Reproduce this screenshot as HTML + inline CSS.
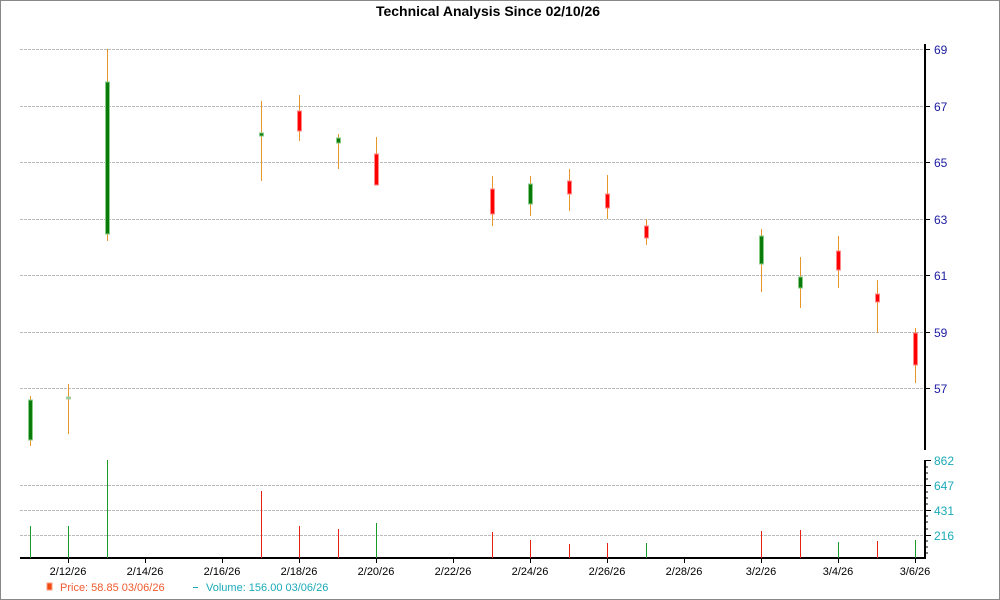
<!DOCTYPE html>
<html><head><meta charset="utf-8"><style>
html,body{margin:0;padding:0;background:#fff;}
svg{display:block;font-family:"Liberation Sans",sans-serif;}
</style></head><body>
<svg width="1000" height="600" viewBox="0 0 1000 600" xmlns="http://www.w3.org/2000/svg">
<rect x="0.5" y="0.5" width="999" height="599" fill="#fff" stroke="#888" stroke-width="1"/>
<text x="488" y="16" text-anchor="middle" font-size="14" font-weight="bold" fill="#000">Technical Analysis Since 02/10/26</text>
<g stroke="#bbb" stroke-dasharray="3,1" stroke-width="1">
<line x1="20" y1="49.5" x2="924" y2="49.5"/><line x1="20" y1="106.5" x2="924" y2="106.5"/>
<line x1="20" y1="162.5" x2="924" y2="162.5"/><line x1="20" y1="219.5" x2="924" y2="219.5"/>
<line x1="20" y1="275.5" x2="924" y2="275.5"/><line x1="20" y1="332.5" x2="924" y2="332.5"/>
<line x1="20" y1="388.5" x2="924" y2="388.5"/>
<line x1="20" y1="485.5" x2="924" y2="485.5"/><line x1="20" y1="510.5" x2="924" y2="510.5"/>
<line x1="20" y1="535.5" x2="924" y2="535.5"/>
</g>
<!-- axes -->
<line x1="925" y1="44" x2="925" y2="450" stroke="#000" stroke-width="2"/>
<line x1="925" y1="460" x2="925" y2="559" stroke="#000" stroke-width="2"/>
<line x1="20" y1="558" x2="926" y2="558" stroke="#000" stroke-width="2"/>
<g stroke="#000" stroke-width="1">
<line x1="925" y1="49.5" x2="930" y2="49.5"/><line x1="925" y1="106.5" x2="930" y2="106.5"/>
<line x1="925" y1="162.5" x2="930" y2="162.5"/><line x1="925" y1="219.5" x2="930" y2="219.5"/>
<line x1="925" y1="275.5" x2="930" y2="275.5"/><line x1="925" y1="332.5" x2="930" y2="332.5"/>
<line x1="925" y1="388.5" x2="930" y2="388.5"/>
<line x1="925" y1="460.5" x2="931" y2="460.5"/><line x1="925" y1="485.5" x2="931" y2="485.5"/>
<line x1="925" y1="510.5" x2="931" y2="510.5"/><line x1="925" y1="535.5" x2="931" y2="535.5"/>
<line x1="925" y1="467" x2="928" y2="467"/><line x1="925" y1="473" x2="928" y2="473"/><line x1="925" y1="479" x2="928" y2="479"/>
<line x1="925" y1="492" x2="928" y2="492"/><line x1="925" y1="498" x2="928" y2="498"/><line x1="925" y1="504" x2="928" y2="504"/>
<line x1="925" y1="516" x2="928" y2="516"/><line x1="925" y1="522" x2="928" y2="522"/><line x1="925" y1="529" x2="928" y2="529"/>
<line x1="925" y1="541" x2="928" y2="541"/><line x1="925" y1="547" x2="928" y2="547"/><line x1="925" y1="553" x2="928" y2="553"/>
<line x1="68.5" y1="558" x2="68.5" y2="563"/><line x1="145.5" y1="558" x2="145.5" y2="563"/>
<line x1="222.5" y1="558" x2="222.5" y2="563"/><line x1="299.5" y1="558" x2="299.5" y2="563"/>
<line x1="376.5" y1="558" x2="376.5" y2="563"/><line x1="453.5" y1="558" x2="453.5" y2="563"/>
<line x1="530.5" y1="558" x2="530.5" y2="563"/><line x1="607.5" y1="558" x2="607.5" y2="563"/>
<line x1="684.5" y1="558" x2="684.5" y2="563"/><line x1="761.5" y1="558" x2="761.5" y2="563"/>
<line x1="838.5" y1="558" x2="838.5" y2="563"/><line x1="915.5" y1="558" x2="915.5" y2="563"/>
</g>
<g font-size="12" fill="#1a1aa0">
<text x="934" y="54">69</text><text x="934" y="111">67</text><text x="934" y="167">65</text>
<text x="934" y="224">63</text><text x="934" y="280">61</text><text x="934" y="337">59</text>
<text x="934" y="393">57</text>
</g>
<g font-size="12" fill="#1aaab8">
<text x="934" y="465">862</text><text x="934" y="490">647</text><text x="934" y="515">431</text><text x="934" y="540">216</text>
</g>
<g font-size="11" fill="#000" text-anchor="middle">
<text x="68" y="575">2/12/26</text><text x="145" y="575">2/14/26</text><text x="222" y="575">2/16/26</text>
<text x="299" y="575">2/18/26</text><text x="376" y="575">2/20/26</text><text x="453" y="575">2/22/26</text>
<text x="530" y="575">2/24/26</text><text x="607" y="575">2/26/26</text><text x="684" y="575">2/28/26</text>
<text x="761" y="575">3/2/26</text><text x="838" y="575">3/4/26</text><text x="915" y="575">3/6/26</text>
</g>
<!-- wicks -->
<g stroke="#e8962a" stroke-width="1">
<line x1="30.5" y1="396" x2="30.5" y2="446"/><line x1="68.5" y1="384" x2="68.5" y2="434"/>
<line x1="107.5" y1="49" x2="107.5" y2="241"/><line x1="261.5" y1="101" x2="261.5" y2="181"/>
<line x1="299.5" y1="95" x2="299.5" y2="141"/><line x1="338.5" y1="134" x2="338.5" y2="169"/>
<line x1="376.5" y1="137" x2="376.5" y2="185"/><line x1="492.5" y1="176" x2="492.5" y2="226"/>
<line x1="530.5" y1="176" x2="530.5" y2="216"/><line x1="569.5" y1="169" x2="569.5" y2="211"/>
<line x1="607.5" y1="175" x2="607.5" y2="219"/><line x1="646.5" y1="219" x2="646.5" y2="245"/>
<line x1="761.5" y1="229" x2="761.5" y2="292"/><line x1="800.5" y1="257" x2="800.5" y2="308"/>
<line x1="838.5" y1="236" x2="838.5" y2="288"/><line x1="877.5" y1="280" x2="877.5" y2="333"/>
<line x1="915.5" y1="328" x2="915.5" y2="383"/>
</g>
<!-- bodies -->
<g stroke-width="1">
<rect x="28.5" y="400" width="4" height="40" fill="#0a7a0a" stroke="#8c8"/>
<rect x="66.5" y="397" width="4" height="2" fill="#8c8" stroke="#aca"/>
<rect x="105.5" y="82" width="4" height="152" fill="#0a7a0a" stroke="#8c8"/>
<rect x="259.5" y="133" width="4" height="3" fill="#0a7a0a" stroke="#8c8"/>
<rect x="297.5" y="111" width="4" height="20" fill="#f00" stroke="#f88"/>
<rect x="336.5" y="138" width="4" height="5" fill="#0a7a0a" stroke="#8c8"/>
<rect x="374.5" y="154" width="4" height="31" fill="#f00" stroke="#f88"/>
<rect x="490.5" y="189" width="4" height="25" fill="#f00" stroke="#f88"/>
<rect x="528.5" y="184" width="4" height="20" fill="#0a7a0a" stroke="#8c8"/>
<rect x="567.5" y="181" width="4" height="13" fill="#f00" stroke="#f88"/>
<rect x="605.5" y="194" width="4" height="14" fill="#f00" stroke="#f88"/>
<rect x="644.5" y="226" width="4" height="12" fill="#f00" stroke="#f88"/>
<rect x="759.5" y="236" width="4" height="28" fill="#0a7a0a" stroke="#8c8"/>
<rect x="798.5" y="277" width="4" height="11" fill="#0a7a0a" stroke="#8c8"/>
<rect x="836.5" y="251" width="4" height="19" fill="#f00" stroke="#f88"/>
<rect x="875.5" y="294" width="4" height="8" fill="#f00" stroke="#f88"/>
<rect x="913.5" y="333" width="4" height="32" fill="#f00" stroke="#f88"/>
</g>
<!-- volume -->
<g stroke-width="1">
<line x1="30.5" y1="526" x2="30.5" y2="558" stroke="#1a9a2a"/>
<line x1="68.5" y1="526" x2="68.5" y2="558" stroke="#1a9a2a"/>
<line x1="107.5" y1="460" x2="107.5" y2="558" stroke="#1a9a2a"/>
<line x1="261.5" y1="491" x2="261.5" y2="558" stroke="#e82010"/>
<line x1="299.5" y1="526" x2="299.5" y2="558" stroke="#e82010"/>
<line x1="338.5" y1="529" x2="338.5" y2="558" stroke="#e82010"/>
<line x1="376.5" y1="523" x2="376.5" y2="558" stroke="#1a9a2a"/>
<line x1="492.5" y1="532" x2="492.5" y2="558" stroke="#e82010"/>
<line x1="530.5" y1="540" x2="530.5" y2="558" stroke="#e82010"/>
<line x1="569.5" y1="544" x2="569.5" y2="558" stroke="#e82010"/>
<line x1="607.5" y1="543" x2="607.5" y2="558" stroke="#e82010"/>
<line x1="646.5" y1="543" x2="646.5" y2="558" stroke="#1a9a2a"/>
<line x1="761.5" y1="531" x2="761.5" y2="558" stroke="#e82010"/>
<line x1="800.5" y1="530" x2="800.5" y2="558" stroke="#e82010"/>
<line x1="838.5" y1="542" x2="838.5" y2="558" stroke="#1a9a2a"/>
<line x1="877.5" y1="541" x2="877.5" y2="558" stroke="#e82010"/>
<line x1="915.5" y1="540" x2="915.5" y2="558" stroke="#1a9a2a"/>
</g>
<!-- legend -->
<rect x="47" y="583" width="5" height="7" fill="#f04a10" stroke="#f9a080"/>
<text x="60" y="591" font-size="11" fill="#f05a30">Price: 58.85  03/06/26</text>
<line x1="193" y1="587.5" x2="198" y2="587.5" stroke="#1aaab8"/>
<text x="206" y="591" font-size="11" fill="#1aaab8">Volume: 156.00  03/06/26</text>
</svg>
</body></html>
